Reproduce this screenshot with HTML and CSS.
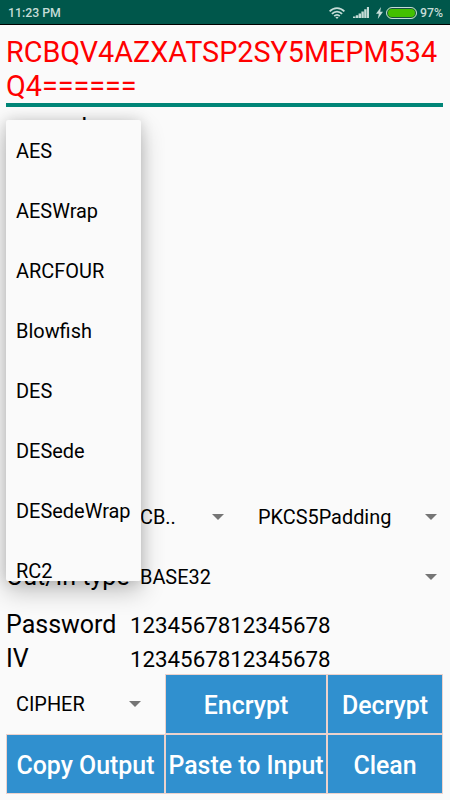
FILE: index.html
```
<!DOCTYPE html>
<html lang="en">
<head>
  <meta charset="UTF-8" />
  <meta name="viewport" content="width=device-width, initial-scale=1.0" />
  <title>Cipher</title>
  <link rel="stylesheet" href="styles.css">
</head>
<body>
  <header class="status-bar">
    <span>11:23 PM</span>
    <div class="status-icons">
      <svg class="wifi" width="16" height="12" viewBox="0 0 16 12" fill="none" stroke="#c5dcd7" stroke-width="1.8">
        <path d="M0.6 4.4C4.8 0 11.2 0 15.4 4.4M2.9 6.8C5.8 3.8 10.2 3.8 13.1 6.8M5.2 9.1C6.9 7.4 9.1 7.4 10.8 9.1" />
        <path d="M8 12L6.4 10.3Q8 9.2 9.6 10.3Z" fill="#c5dcd7" stroke="none" />
      </svg>
      <svg class="signal" width="16" height="11" viewBox="0 0 16 11" fill="#c5dcd7">
        <path d="M0 9.5h2.4V11H0zM2.8 8.3h2.4V11H2.8zM5.6 6.6H8V11H5.6zM8.4 4.4h2.4V11H8.4zM11.2 2.2h2.3V11h-2.3zM13.9 0H16v11h-2.1z" />
      </svg>
      <svg class="bolt" width="7" height="12" viewBox="0 0 7 12" fill="#c5dcd7">
        <path d="M5 0L0 6.8h2.8L1.8 12 7 4.8H4.2z" />
      </svg>
      <span class="battery"></span>
      <span class="percent">97%</span>
    </div>
  </header>

  <main>
    <div class="output">RCBQV4AZXATSP2SY5MEPM534<br>Q4======</div>

    <div class="input-area">
      <div class="input-text">example</div>
      <!-- Algorithm dropdown -->
      <ul class="menu">
        <li>AES</li>
        <li>AESWrap</li>
        <li>ARCFOUR</li>
        <li>Blowfish</li>
        <li>DES</li>
        <li>DESede</li>
        <li>DESedeWrap</li>
        <li>RC2</li>
      </ul>
    </div>

    <div class="row">
      <div class="spinner mode">CB..<i class="arrow"></i></div>
      <div class="spinner padding">PKCS5Padding<i class="arrow"></i></div>
    </div>
    <div class="row">
      <label class="type-label">Out/In type</label>
      <div class="spinner type">BASE32<i class="arrow"></i></div>
    </div>
    <div class="field"><label>Password</label><span>1234567812345678</span></div>
    <div class="field"><label>IV</label><span>1234567812345678</span></div>

    <div class="buttons">
      <div class="spinner cipher">CIPHER<i class="arrow"></i></div>
      <button>Encrypt</button>
      <button>Decrypt</button>
      <button>Copy Output</button>
      <button>Paste to Input</button>
      <button>Clean</button>
    </div>
  </main>
</body>
</html>
```

FILE: styles.css
```
* {
  box-sizing: border-box;
}
body {
  margin: 0;
  height: 800px;
  overflow: hidden;
  background: #fafafa;
  color: #000;
  font-family: Roboto, sans-serif;
}
.status-bar {
  display: flex;
  justify-content: space-between;
  align-items: center;
  height: 25px;
  padding: 1px 8px 0;
  background: #00574b;
  border-bottom: 1px solid #000;
  color: #c5dcd7;
  font-size: 12.3px;
  font-weight: 500;
}
.status-icons {
  display: flex;
  align-items: center;
}
.signal {
  margin-left: 8px;
}
.bolt {
  margin-left: 7px;
}
.battery {
  width: 31px;
  height: 12px;
  margin: 0 3px;
  border: 1px solid #c5dcd7;
  border-radius: 6px;
  background: #43c000;
  box-shadow: inset 0 0 0 1px #17503f;
}
.percent {
  margin-right: -1px;
}
main {
  padding: 0 7px 0 6px;
}
.output {
  height: 82px;
  padding-top: 10px;
  border-bottom: 4px solid #008577;
  color: #f00;
  font-size: 28.75px;
  line-height: 34px;
  white-space: nowrap;
}
.input-area {
  position: relative;
  height: 380px;
}
.input-text {
  padding-top: 6px;
  font-size: 25px;
  line-height: 29px;
}
.menu {
  position: absolute;
  top: 13px;
  left: 0;
  width: 135px;
  height: 461px;
  margin: 0;
  padding: 0;
  overflow: hidden;
  list-style: none;
  background: #fafafa;
  border-radius: 2px;
  box-shadow: 0 10px 24px rgba(0, 0, 0, 0.24), 0 0 14px rgba(0, 0, 0, 0.14);
  z-index: 1;
}
.menu li {
  height: 60px;
  padding-left: 10px;
  font-size: 19.95px;
  line-height: 62px;
}
.row {
  display: flex;
  height: 60px;
}
.spinner {
  display: flex;
  align-items: center;
  justify-content: space-between;
  font-size: 19.9px;
}
.arrow {
  border: 6px solid transparent;
  border-top-color: #757575;
  border-bottom: 0;
}
.mode {
  width: 84px;
  margin-left: 134px;
}
.padding {
  width: 179px;
  margin-left: 34px;
}
.type-label {
  width: 134px;
  font-size: 25px;
  line-height: 59px;
}
.type {
  width: 297px;
}
.field {
  display: flex;
  align-items: baseline;
  height: 34px;
  font-size: 25px;
  line-height: 35px;
}
.field label {
  width: 124px;
}
.field span {
  font-size: 22.3px;
}
.buttons {
  display: grid;
  grid-template-columns: 159px 162px 116px;
  grid-template-rows: 60px 60px;
  margin-top: -1px;
}
.cipher {
  padding: 0 24px 0 10px;
}
button {
  padding: 2px 0 0;
  background: #3090cf;
  border: 1px solid #ecd2cc;
  color: #fff;
  font-family: inherit;
  font-size: 24.9px;
  font-weight: 500;
  white-space: nowrap;
}
```
